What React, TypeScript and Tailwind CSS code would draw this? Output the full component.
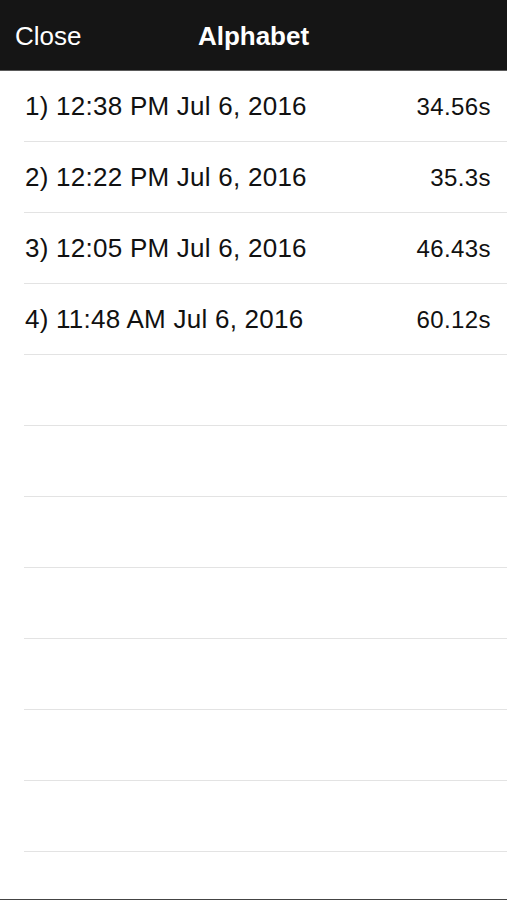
const runs = [
  { label: "1) 12:38 PM Jul 6, 2016", time: "34.56s" },
  { label: "2) 12:22 PM Jul 6, 2016", time: "35.3s" },
  { label: "3) 12:05 PM Jul 6, 2016", time: "46.43s" },
  { label: "4) 11:48 AM Jul 6, 2016", time: "60.12s" },
];

export default function App() {
  const empty = Array.from({ length: 7 });

  return (
    <div className="w-[507px] h-[900px] bg-white flex flex-col overflow-hidden font-['Liberation_Sans',Arial,sans-serif]">
      {/* Nav bar */}
      <div className="relative h-[71px] shrink-0 bg-[#151515] border-b border-[#5a5a5a] flex items-center pt-[3px]">
        <span className="pl-[15px] text-[26px] text-white">Close</span>
        <span className="absolute left-1/2 -translate-x-1/2 text-[26px] font-bold text-white">Alphabet</span>
      </div>

      {/* Results list */}
      <div className="flex-1 pl-[24px]">
        {runs.map((r) => (
          <div
            key={r.label}
            className="h-[71px] border-b border-[#e3e3e3] flex items-center justify-between pr-[16px] text-[26px] text-[#111] pt-[1px]"
          >
            <span className="pl-[1px] tracking-[0.25px]">{r.label}</span>
            <span className="text-[24px] tracking-[0.4px]">{r.time}</span>
          </div>
        ))}
        {empty.map((_, i) => (
          <div key={i} className="h-[71px] border-b border-[#e3e3e3]" />
        ))}
      </div>

      <div className="h-[1px] shrink-0 bg-[#444]" />
    </div>
  );
}
